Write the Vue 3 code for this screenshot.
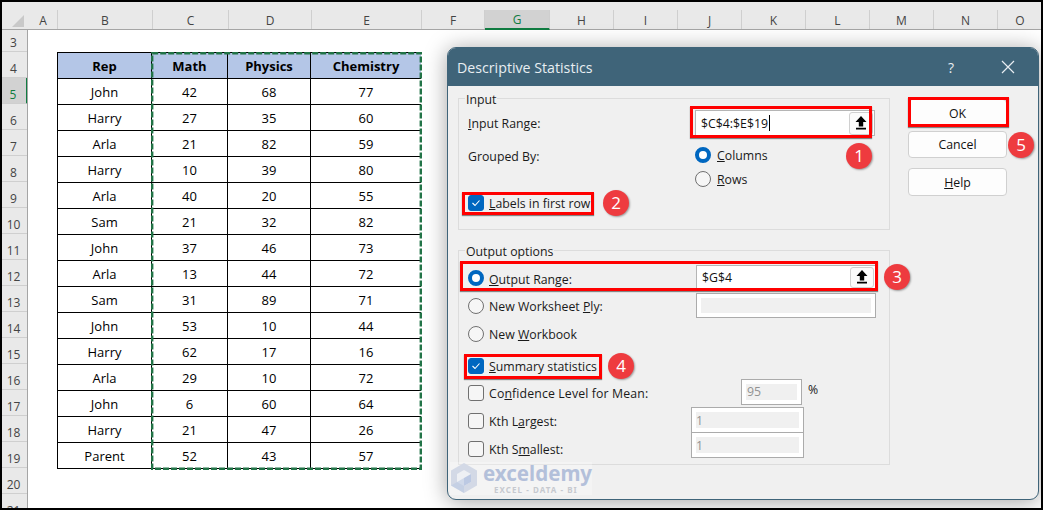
<script setup>
const colHeads = [
  { l: 'A', w: 29 }, { l: 'B', w: 95 }, { l: 'C', w: 76 }, { l: 'D', w: 83 }, { l: 'E', w: 110 },
  { l: 'F', w: 63 }, { l: 'G', w: 65, active: true }, { l: 'H', w: 64 }, { l: 'I', w: 64 }, { l: 'J', w: 64 },
  { l: 'K', w: 64 }, { l: 'L', w: 64 }, { l: 'M', w: 64 }, { l: 'N', w: 64 }, { l: 'O', w: 45 }
]
const rowHeads = [3, 4, 5, 6, 7, 8, 9, 10, 11, 12, 13, 14, 15, 16, 17, 18, 19, 20, 21]
const rows = [
  ['John', 42, 68, 77], ['Harry', 27, 35, 60], ['Arla', 21, 82, 59], ['Harry', 10, 39, 80],
  ['Arla', 40, 20, 55], ['Sam', 21, 32, 82], ['John', 37, 46, 73], ['Arla', 13, 44, 72],
  ['Sam', 31, 89, 71], ['John', 53, 10, 44], ['Harry', 62, 17, 16], ['Arla', 29, 10, 72],
  ['John', 6, 60, 64], ['Harry', 21, 47, 26], ['Parent', 52, 43, 57]
]
</script>

<template>
  <div class="frame">
    <div class="colbar">
      <div class="corner"><span class="tri"></span></div>
      <div
        v-for="c in colHeads"
        :key="c.l"
        class="colhead"
        :class="{ active: c.active }"
        :style="{ width: c.w + 'px' }"
      >{{ c.l }}</div>
    </div>
    <div class="sheet">
      <div class="rowbar">
        <div
          v-for="r in rowHeads"
          :key="r"
          class="rowhead"
          :class="{ first: r === 3, active: r === 5 }"
        >{{ r }}</div>
      </div>
      <div class="canvas">
        <div class="tablewrap">
          <div class="trow thead">
            <div class="c b">Rep</div><div class="c m">Math</div><div class="c p">Physics</div><div class="c e">Chemistry</div>
          </div>
          <div v-for="(r, i) in rows" :key="i" class="trow">
            <div class="c b">{{ r[0] }}</div><div class="c m">{{ r[1] }}</div><div class="c p">{{ r[2] }}</div><div class="c e">{{ r[3] }}</div>
          </div>
          <svg class="ants" width="271" height="418" viewBox="0 0 271 418">
            <rect x="1.2" y="1.2" width="268.6" height="415.6" fill="none" stroke="#217346" stroke-width="2.4" stroke-dasharray="6 2" />
          </svg>
        </div>
      </div>
    </div>

    <div class="dialog">
      <div class="titlebar">
        <span class="title">Descriptive Statistics</span>
        <span class="help">?</span>
        <svg class="close" width="14" height="14" viewBox="0 0 14 14"><path d="M1 1 L13 13 M13 1 L1 13" stroke="#e8eef2" stroke-width="1.2" fill="none" /></svg>
      </div>
      <div class="dbody">
        <div class="groups">
          <div class="group g-input">
            <span class="legend">Input</span>
            <div class="line h26">
              <span class="lab w227"><u>I</u>nput Range:</span>
              <div class="field refinput">
                <span class="val">$C$4:$E$19<i class="caret"></i></span>
                <button class="up"><svg width="12" height="14" viewBox="0 0 12 14"><path d="M6 0 L11.5 6 H8.2 V10.5 H3.8 V6 H.5 Z M1 11.8 H11 V13.6 H1 Z" fill="#000" /></svg></button>
              </div>
            </div>
            <div class="line grouped">
              <span class="lab w227 gb">Grouped By:</span>
              <div class="radios">
                <label class="opt"><span class="radio on"></span><span><u>C</u>olumns</span></label>
                <label class="opt"><span class="radio"></span><span><u>R</u>ows</span></label>
              </div>
            </div>
            <div class="line h22 mt1">
              <span class="check on"><svg width="10" height="8" viewBox="0 0 10 8"><path d="M1.5 4 L4 6.5 L8.5 1.5" stroke="#fff" stroke-width="1.1" fill="none" /></svg></span>
              <span><u>L</u>abels in first row</span>
            </div>
          </div>

          <div class="group g-output">
            <span class="legend">Output options</span>
            <div class="line h26">
              <span class="radio on"></span>
              <span class="lab w207 low"><u>O</u>utput Range:</span>
              <div class="field outinput">
                <span class="val">$G$4</span>
                <button class="up up2"><svg width="12" height="14" viewBox="0 0 12 14"><path d="M6 0 L11.5 6 H8.2 V10.5 H3.8 V6 H.5 Z M1 11.8 H11 V13.6 H1 Z" fill="#000" /></svg></button>
              </div>
            </div>
            <div class="line h26">
              <span class="radio"></span>
              <span class="lab w207">New Worksheet <u>P</u>ly:</span>
              <div class="dis wide"></div>
            </div>
            <div class="line h26">
              <span class="radio"></span>
              <span>New <u>W</u>orkbook</span>
            </div>
            <div class="line h26 mt6">
              <span class="check on"><svg width="10" height="8" viewBox="0 0 10 8"><path d="M1.5 4 L4 6.5 L8.5 1.5" stroke="#fff" stroke-width="1.1" fill="none" /></svg></span>
              <span><u>S</u>ummary statistics</span>
            </div>
            <div class="line h26 pull">
              <span class="check"></span>
              <span class="lab w253 wider">Co<u>n</u>fidence Level for Mean:</span>
              <div class="dis conf"><span>95</span></div>
              <span class="pct">%</span>
            </div>
            <div class="line h26">
              <span class="check"></span>
              <span class="lab w202">Kth L<u>a</u>rgest:</span>
              <div class="dis kth kth1"><span>1</span></div>
            </div>
            <div class="line h26">
              <span class="check"></span>
              <span class="lab w202">Kth S<u>m</u>allest:</span>
              <div class="dis kth kth2"><span>1</span></div>
            </div>
          </div>
        </div>
        <div class="buttons">
          <button class="btn">OK</button>
          <button class="btn second">Cancel</button>
          <button class="btn"><u>H</u>elp</button>
        </div>
      </div>
      <div class="watermark">
        <svg class="wlogo" width="28" height="32" viewBox="0 0 28 32">
          <path d="M14 1 L27 8.5 V23.5 L14 31 L1 23.5 V8.5 Z" fill="#d3d9e6" />
          <path d="M14 8 L21 12 V20 L14 24 L7 20 V12 Z" fill="#eef0f4" />
          <path d="M14 16 L21 12 V20 L14 24 Z" fill="#bcc9e3" />
          <path d="M1 23.5 L14 16 L14 31 Z" fill="#bcc9e3" opacity=".6" />
        </svg>
        <div class="wtext">
          <span class="wname">exceldemy</span>
          <span class="wsub">EXCEL - DATA - BI</span>
        </div>
      </div>
    </div>

    <div class="mark m1"></div>
    <div class="mark m2"></div>
    <div class="mark m3"></div>
    <div class="mark m4"></div>
    <div class="mark m5"></div>
    <div class="badge b1">1</div>
    <div class="badge b2">2</div>
    <div class="badge b3">3</div>
    <div class="badge b4">4</div>
    <div class="badge b5">5</div>
  </div>
</template>

<style>
html, body { margin: 0; background: #000; }
</style>

<style scoped>
.frame {
  position: relative;
  box-sizing: border-box;
  width: 1043px;
  height: 510px;
  border: 2px solid #000;
  background: #fff;
  overflow: hidden;
  font-family: "Open Sans", "Noto Sans", sans-serif;
  color: #111;
}
.colbar {
  display: flex;
  height: 28px;
  box-sizing: border-box;
  background: #e9e9e9;
  border-bottom: 1px solid #a5a5a5;
}
.corner { width: 27px; flex: none; position: relative; }
.tri {
  position: absolute;
  left: 10px;
  top: 13px;
  width: 0;
  height: 0;
  border-left: 12px solid transparent;
  border-bottom: 12px solid #c9c9c9;
}
.colhead {
  flex: none;
  box-sizing: border-box;
  margin-top: 8px;
  height: 19px;
  line-height: 21px;
  text-align: center;
  font-size: 12px;
  color: #444;
  border-right: 1px solid #cfcfcf;
}
.colhead.active {
  background: #d2d2d2;
  color: #107c41;
  height: 20px;
  border-bottom: 2px solid #107c41;
  line-height: 20px;
}
.sheet { display: flex; height: 478px; }
.rowbar {
  flex: none;
  width: 26px;
  box-sizing: border-box;
  background: #e9e9e9;
  border-right: 1px solid #a5a5a5;
  overflow: hidden;
}
.rowhead {
  box-sizing: border-box;
  height: 26px;
  padding: 9px 2px 0 0;
  line-height: 16px;
  text-align: center;
  font-size: 12px;
  color: #444;
  border-bottom: 1px solid #cfcfcf;
}
.rowhead.first { height: 22px; padding-top: 5px; }
.rowhead.active {
  background: #d2d2d2;
  color: #107c41;
  width: 26px;
  border-right: 2px solid #107c41;
}
.canvas { flex: 1; padding: 22px 0 0 29px; }
.tablewrap {
  position: relative;
  width: 364px;
  border-top: 1px solid #000;
  border-left: 1px solid #000;
  box-sizing: border-box;
}
.trow {
  display: grid;
  grid-template-columns: 94px 76px 83px 110px;
  height: 26px;
  box-sizing: border-box;
  border-bottom: 1px solid #000;
  font-size: 13px;
  line-height: 27px;
  text-align: center;
  color: #000;
}
.c { border-right: 1px solid #000; }
.trow .e { border-right: 0; }
.thead { background: #b4c6e7; font-weight: 700; }
.ants {
  position: absolute;
  left: 93px;
  top: -1px;
}
.dialog {
  position: absolute;
  left: 445px;
  top: 45px;
  width: 592px;
  height: 453px;
  box-sizing: border-box;
  background: #f0f0f0;
  border: 1px solid #3f6479;
  border-radius: 9px;
  box-shadow: 0 2px 22px rgba(0, 0, 0, .36);
  overflow: hidden;
  font-size: 12.3px;
  color: #1a1a1a;
}
.titlebar {
  display: flex;
  align-items: center;
  height: 38px;
  background: #3f6479;
  color: #e8eef2;
  padding-left: 9px;
}
.title { font-size: 14.2px; flex: 1; }
.help { font-size: 14px; margin-right: 47px; }
.close { margin-right: 23px; }
.dbody { display: flex; padding: 12px 0 0 10px; }
.groups { width: 432px; flex: none; }
.group {
  position: relative;
  box-sizing: border-box;
  border: 1px solid #dcdcdc;
}
.g-input { height: 132px; padding: 11px 9px 0; }
.g-output { height: 215px; margin-top: 20px; padding: 14px 9px 0; display: flex; flex-direction: column; gap: 2px; }
.legend {
  position: absolute;
  left: 6px;
  top: -7px;
  padding: 0 1px;
  line-height: 16px;
  background: #f0f0f0;
}
.line { display: flex; align-items: center; }
.h26 { height: 26px; }
.h22 { height: 22px; }
.mt1 { margin-top: 1px; }
.mt6 { margin-top: 4px; }
.pull { margin-top: -1px; }
.lab { flex: none; }
.low { padding-top: 3px; box-sizing: border-box; }
.wider { letter-spacing: .13px; }
.w227 { width: 227px; }
.w207 { width: 207px; }
.w202 { width: 202px; }
.w253 { width: 252px; }
.grouped { align-items: flex-start; height: 48px; margin-top: 7px; }
.gb { line-height: 16px; margin-top: 6px; }
.radios { display: flex; flex-direction: column; }
.opt { display: flex; align-items: center; height: 24px; }
.opt .radio { margin-right: 6px; }
.radio {
  flex: none;
  box-sizing: border-box;
  width: 16px;
  height: 16px;
  border-radius: 50%;
  border: 1px solid #707070;
  background: #f6f6f6;
  margin-right: 5px;
}
.radio.on {
  background: #fff;
  border: 4px solid #0067c0;
}
.check {
  flex: none;
  box-sizing: border-box;
  width: 16px;
  height: 16px;
  border-radius: 3px;
  border: 1px solid #707070;
  background: #f6f6f6;
  margin-right: 5px;
  display: flex;
  align-items: center;
  justify-content: center;
}
.check.on { background: #0067c0; border-color: #0067c0; }
.field {
  box-sizing: border-box;
  display: flex;
  align-items: center;
  background: #fff;
  border: 1px solid #b5b5b5;
}
.refinput { width: 180px; height: 26px; padding: 0 1px 0 5px; }
.outinput { width: 180px; height: 24px; padding: 0 1px 0 5px; margin-top: -2px; }
.val { flex: 1; color: #111; }
.caret { display: inline-block; width: 1px; height: 16px; background: #000; vertical-align: -3px; margin-left: 1px; }
.up {
  box-sizing: border-box;
  width: 24px;
  height: 23px;
  padding: 0;
  background: #fbfbfb;
  border: 1px solid #d0d0d0;
  border-radius: 3px;
  display: flex;
  align-items: center;
  justify-content: center;
}
.up2 { height: 21px; }
.dis {
  box-sizing: border-box;
  background: #f0f0f0;
  border: 1px solid #ababab;
  outline: 4px solid #fff;
  outline-offset: -5px;
  color: #929292;
  line-height: 16px;
}
.wide { width: 180px; height: 25px; margin-top: -2px; }
.conf { width: 61px; height: 26px; padding: 4px 0 0 5px; align-self: flex-start; margin-top: -1px; }
.kth { width: 113px; height: 26px; padding: 5px 0 0 4px; align-self: flex-start; }
.kth1 { margin-top: -1px; }
.kth2 { margin-top: -4px; }
.pct { margin: -7px 0 0 6px; }
.buttons { display: flex; flex-direction: column; margin: 1px 0 0 18px; width: 99px; }
.btn {
  box-sizing: border-box;
  height: 28px;
  margin-bottom: 4px;
  background: #fdfdfd;
  border: 1px solid #d0d0d0;
  border-radius: 4px;
  font: inherit;
  color: #111;
  padding: 0;
}
.second { height: 27px; margin-bottom: 10px; }
.watermark {
  position: absolute;
  left: 2px;
  top: 414px;
  width: 142px;
  height: 33px;
  display: flex;
  gap: 5px;
  background: rgba(255, 255, 255, .25);
}
.wlogo { flex: none; }
.wtext { display: flex; flex-direction: column; }
.wname {
  font-family: "Noto Sans", sans-serif;
  font-size: 20.5px;
  font-weight: 700;
  line-height: 22px;
  color: #b3c0da;
}
.wsub {
  margin-left: 11px;
  font-family: "Noto Sans", sans-serif;
  font-size: 8px;
  font-weight: 700;
  letter-spacing: 1.05px;
  line-height: 11px;
  color: #c6c9cf;
}
.mark { position: absolute; box-sizing: border-box; border: 3px solid #f00; box-shadow: 0 1px 1px rgba(0, 0, 0, .45); }
.m1 { left: 688px; top: 104px; width: 182px; height: 32px; }
.m2 { left: 460px; top: 190px; width: 132px; height: 23px; }
.m3 { left: 458px; top: 259px; width: 418px; height: 30px; }
.m4 { left: 462px; top: 352px; width: 138px; height: 25px; }
.m5 { left: 906px; top: 95px; width: 101px; height: 30px; }
.badge {
  position: absolute;
  width: 26px;
  height: 26px;
  border-radius: 50%;
  background: #ee3b3f;
  box-shadow: 1px 1px 2px rgba(0, 0, 0, .35);
  color: #fff;
  font-family: "Open Sans", sans-serif;
  font-size: 17px;
  font-weight: 500;
  line-height: 26px;
  text-align: center;
}
.b1 { left: 844px; top: 141px; }
.b2 { left: 601px; top: 188px; }
.b3 { left: 882px; top: 262px; }
.b4 { left: 606px; top: 351px; }
.b5 { left: 1006px; top: 130px; }
</style>
